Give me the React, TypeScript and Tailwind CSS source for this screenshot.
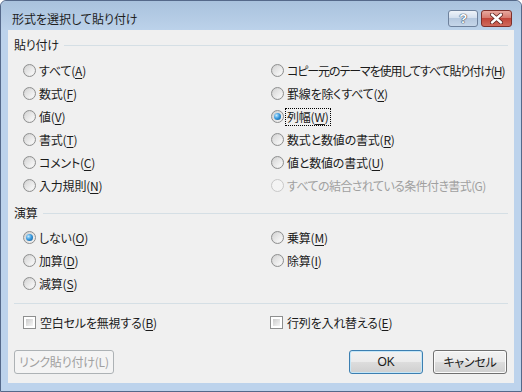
import React from "react"

interface Item {
  t: string
  k?: string
  on?: boolean
  off?: boolean
  focus?: boolean
  tight?: string
}

const pasteRows: [Item, Item | null][] = [
  [{ t: "すべて", k: "A" }, { t: "コピー元のテーマを使用してすべて貼り付け", k: "H", tight: "tracking-[-1.1px]" }],
  [{ t: "数式", k: "F" }, { t: "罫線を除くすべて", k: "X" }],
  [{ t: "値", k: "V" }, { t: "列幅", k: "W", on: true, focus: true }],
  [{ t: "書式", k: "T" }, { t: "数式と数値の書式", k: "R" }],
  [{ t: "コメント", k: "C" }, { t: "値と数値の書式", k: "U" }],
  [{ t: "入力規則", k: "N" }, { t: "すべての結合されている条件付き書式(G)", off: true, tight: "tracking-[-0.6px]" }],
]

const opRows: [Item, Item | null][] = [
  [{ t: "しない", k: "O", on: true }, { t: "乗算", k: "M" }],
  [{ t: "加算", k: "D" }, { t: "除算", k: "I" }],
  [{ t: "減算", k: "S" }, null],
]

function Label({ item }: { item: Item }) {
  return (
    <span
      className={`h-[18px] leading-[16px] px-[1px] whitespace-nowrap border border-dotted ${
        item.focus ? "border-black" : "border-transparent"
      } ${item.off ? "text-[#a0a0a0]" : "text-[#1b1b1b]"} ${item.tight ?? ""}`}
    >
      {item.t}
      {item.k && (
        <>
          (<span className="underline underline-offset-2 decoration-1">{item.k}</span>)
        </>
      )}
    </span>
  )
}

function Radio({ on, off }: { on?: boolean; off?: boolean }) {
  return (
    <span
      className={`w-[13px] h-[13px] rounded-full border shrink-0 flex items-center justify-center ${
        off
          ? "border-[#c8c8c8] bg-[#f4f4f4]"
          : "border-[#8e8f8f] bg-[linear-gradient(135deg,#cfcfcf,#f6f6f6)]"
      }`}
    >
      {on ? (
        <span className="w-[7px] h-[7px] rounded-full bg-[radial-gradient(circle_at_35%_35%,#c4eafd_0%,#3a9be0_45%,#0b4f86_100%)]" />
      ) : (
        <span
          className={`w-[9px] h-[9px] rounded-full ${
            off ? "bg-[#f4f4f4]" : "bg-[linear-gradient(135deg,#d6d6d6,#fbfbfb)]"
          }`}
        />
      )}
    </span>
  )
}

function Check() {
  return (
    <span className="w-[13px] h-[13px] border border-[#8e8f8f] bg-white shrink-0 p-[2px]">
      <span className="block w-full h-full bg-[linear-gradient(135deg,#cbcbcb,#f6f6f6)]" />
    </span>
  )
}

function RadioCell({ item }: { item: Item | null }) {
  if (!item) return <div />
  return (
    <div className="h-[23px] flex items-center gap-[1px]">
      <Radio on={item.on} off={item.off} />
      <Label item={item} />
    </div>
  )
}

function Header({ title }: { title: string }) {
  return (
    <div className="h-[20px] flex items-center gap-[5px] pl-[6px] pr-[6px]">
      <span className="text-[#1b1b1b]">{title}</span>
      <span className="flex-1 h-px bg-[#d5dfe5]" />
    </div>
  )
}

export default function App() {
  return (
    <div className="w-[522px] h-[392px] bg-white text-[12px] tracking-[-0.2px] [font-feature-settings:'palt'] font-['Noto_Sans_CJK_JP',sans-serif]">
      <div className="w-full h-full flex flex-col rounded-t-[6px] border border-[#55698a] bg-[#bdd3ec]">
        {/* Title bar */}
        <div className="h-[29px] flex items-start pt-[9px] pl-[11px] pr-[9px] rounded-t-[6px] bg-[linear-gradient(#a9c2dd,#bcd2ea)]">
          <span className="flex-1 leading-[16px] text-[#1e1e1e] mt-[1px] tracking-normal">形式を選択して貼り付け</span>
          <div className="flex gap-[3px]">
            <div className="w-[30px] h-[17px] rounded-[3px] border border-[#6e819c] bg-[linear-gradient(#eef3f9_0%,#d3dfee_45%,#b5c8df_50%,#c6d6e9_100%)] flex items-center justify-center">
              <span className="text-white font-bold text-[13px] leading-none [text-shadow:0_0_1px_#33465f,0_0_1px_#33465f,0_0_1px_#33465f] font-['Liberation_Sans',sans-serif]">?</span>
            </div>
            <div className="w-[31px] h-[17px] rounded-[3px] border border-[#7e2f2a] bg-[linear-gradient(#e9a99f_0%,#d77b6f_45%,#c2463a_50%,#cf6a5c_100%)] flex items-center justify-center">
              <svg width="13" height="11" viewBox="0 0 13 11">
                <path d="M2 1.5 L11 9.5 M11 1.5 L2 9.5" stroke="#5a1e19" strokeWidth="4" strokeLinecap="round" />
                <path d="M2 1.5 L11 9.5 M11 1.5 L2 9.5" stroke="#ffffff" strokeWidth="2.4" strokeLinecap="round" />
              </svg>
            </div>
          </div>
        </div>

        {/* Client area */}
        <div className="flex-1 mx-[7px] mb-[8px] bg-[#f0f0f0] flex flex-col pt-[5px]">
          <Header title="貼り付け" />
          <div className="mt-[4px] grid grid-cols-[248px_1fr] pl-[15px]">
            {pasteRows.map(([l, r], i) => (
              <React.Fragment key={i}>
                <RadioCell item={l} />
                <RadioCell item={r} />
              </React.Fragment>
            ))}
          </div>

          <div className="mt-[6px]">
            <Header title="演算" />
          </div>
          <div className="mt-[3px] grid grid-cols-[248px_1fr] pl-[15px]">
            {opRows.map(([l, r], i) => (
              <React.Fragment key={i}>
                <RadioCell item={l} />
                <RadioCell item={r} />
              </React.Fragment>
            ))}
          </div>

          <div className="mt-[8px] mx-[6px] h-px bg-[#d5dfe5]" />

          <div className="mt-[7px] grid grid-cols-[247px_1fr] pl-[15px]">
            <div className="h-[23px] flex items-center gap-[2px]">
              <Check />
              <Label item={{ t: "空白セルを無視する", k: "B" }} />
            </div>
            <div className="h-[23px] flex items-center gap-[2px]">
              <Check />
              <Label item={{ t: "行列を入れ替える", k: "E" }} />
            </div>
          </div>

          <div className="mt-[16px] flex items-center pl-[6px] pr-[7px]">
            <div className="w-[100px] h-[24px] rounded-[3px] border border-[#adb2b5] bg-[#f4f4f4] flex items-center justify-center text-[#a0a0a0]">
              リンク貼り付け(L)
            </div>
            <div className="flex-1" />
            <div className="w-[74px] h-[24px] rounded-[3px] border border-[#3c7fb1] bg-[linear-gradient(#f2f2f2_0%,#ebebeb_50%,#dddddd_50%,#cfcfcf_100%)] shadow-[inset_0_0_0_1px_#c5e6f7] flex items-center justify-center text-[#1b1b1b] font-['Liberation_Sans','Noto_Sans_CJK_JP',sans-serif]">
              OK
            </div>
            <div className="ml-[10px] w-[74px] h-[24px] rounded-[3px] border border-[#707070] bg-[linear-gradient(#f2f2f2_0%,#ebebeb_50%,#dddddd_50%,#cfcfcf_100%)] shadow-[inset_0_0_0_1px_#fbfbfb] flex items-center justify-center text-[#1b1b1b]">
              キャンセル
            </div>
          </div>
        </div>
      </div>
    </div>
  )
}
